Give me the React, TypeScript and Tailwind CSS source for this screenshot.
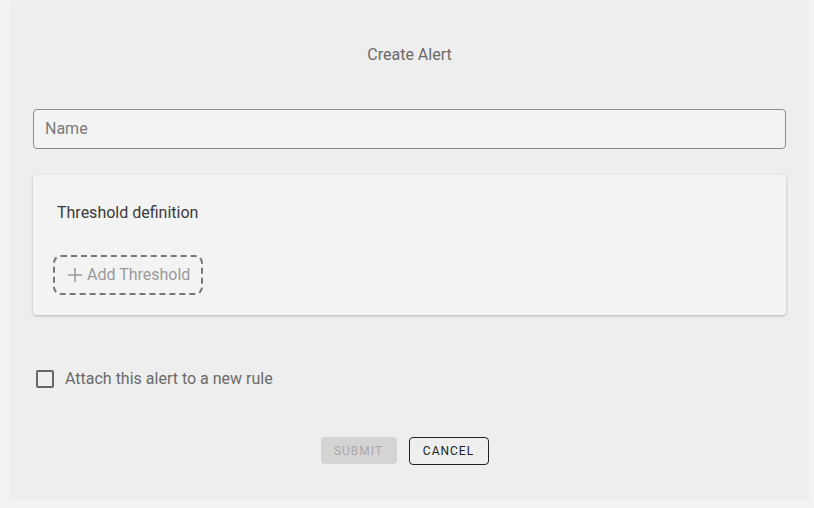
import React from "react";

export default function App() {
  return (
    <div className="w-[814px] h-[508px] bg-[#f3f3f3] pt-px pl-[10px]" style={{ fontFamily: "Roboto, 'Liberation Sans', sans-serif" }}>
      <div className="w-[799px] h-[499px] bg-[#eeeeee] rounded-[2px] flex flex-col px-[23px]">
        <div className="pt-[42px] h-[66px] text-center text-[16px] leading-[24px] text-[#6a6a6a]">Create Alert</div>
        <div className="mt-[42px] h-[40px] border border-[#8a8a8a] rounded-[4px] bg-[#f3f3f3] flex items-center px-[11px] text-[16px] text-[#7a7a7a]">
          Name
        </div>
        <div className="mt-[26px] h-[140px] bg-[#f3f3f3] rounded-[4px] shadow-[0_1px_3px_rgba(0,0,0,0.25)] flex flex-col pt-[26px]">
          <div className="pl-[24px] text-[16px] leading-[24px] text-[#3a3a3a]">Threshold definition</div>
          <div className="mt-[30px] ml-[20px] w-[150px] h-[40px] border-2 border-dashed border-[#777777] rounded-[8px] flex items-center pl-[12px] text-[16px] text-[#9a9a9a]">
            <svg width="16" height="16" viewBox="0 0 16 16" className="mr-[4px]">
              <path d="M8 1v14M1 8h14" stroke="#9a9a9a" strokeWidth="1.6" fill="none" />
            </svg>
            Add Threshold
          </div>
        </div>
        <div className="mt-[55px] flex items-center h-[18px]">
          <div className="ml-[3px] w-[18px] h-[18px] border-2 border-[#666666] rounded-[2px]"></div>
          <span className="ml-[11px] text-[16px] text-[#6a6a6a]">Attach this alert to a new rule</span>
        </div>
        <div className="mt-[49px] flex justify-center gap-[12px] ml-[-10px]">
          <div className="w-[76px] h-[27px] bg-[#d4d4d4] rounded-[4px] flex items-center justify-center text-[12px] tracking-[1px] text-[#a8a8a8]">SUBMIT</div>
          <div className="w-[80px] h-[28px] border border-[#222222] rounded-[4px] flex items-center justify-center text-[12px] tracking-[1px] text-[#222222]">CANCEL</div>
        </div>
      </div>
    </div>
  );
}
